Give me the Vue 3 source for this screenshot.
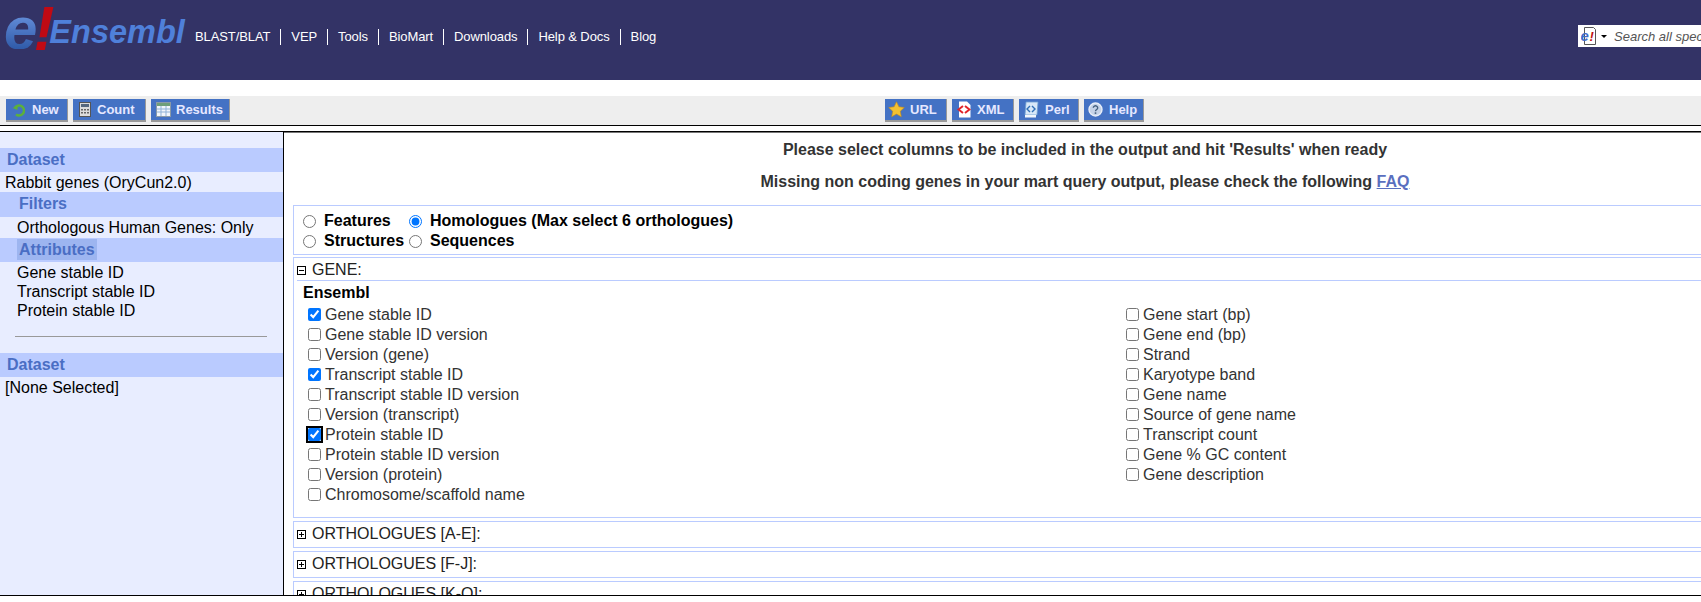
<template>
  <div class="page">
    <header class="masthead">
      <a class="logo">
        <span class="logo-e">e</span><span class="logo-bang">!</span><span class="logo-name">Ensembl</span>
      </a>
      <nav class="nav">
        <a v-for="item in navItems" :key="item">{{ item }}</a>
      </nav>
      <div class="search">
        <svg class="search-icon" width="15" height="18" viewBox="0 0 15 18">
          <path d="M3.500 0.500h9l2 2v15h-11z" fill="#fff" stroke="#555" />
          <text x="-0.500" y="14" class="mini-e">e</text>
          <text x="8.500" y="14" class="mini-bang">!</text>
        </svg>
        <span class="search-caret"></span>
        <span class="search-text">Search all species...</span>
      </div>
    </header>

    <div class="toolbar">
      <div class="tool-group">
        <button class="tool t-new">
          <svg width="14" height="14" viewBox="0 0 14 14">
            <path d="M3 4.500A5 5 0 0 1 12 7a5 5 0 0 1-5 5.500 5 5 0 0 1-3-1" fill="none" stroke="#5cb03c" stroke-width="2.400" />
            <path d="M0.500 4h6L4.600 7.600z" fill="#5cb03c" transform="rotate(-20 3 5)" />
          </svg>
          New
        </button>
        <button class="tool t-count">
          <svg width="12" height="15" viewBox="0 0 12 15">
            <rect x="0.500" y="0.500" width="11" height="14" fill="#dcdcdc" stroke="#555" />
            <rect x="2" y="2" width="8" height="3" fill="#56687e" />
            <path d="M2 7h2v1.500H2zM5 7h2v1.500H5zM8 7h2v1.500H8zM2 10h2v1.500H2zM5 10h2v1.500H5zM8 10h2v1.500H8z" fill="#666" />
          </svg>
          Count
        </button>
        <button class="tool t-results">
          <svg width="15" height="15" viewBox="0 0 15 15">
            <rect x="0.500" y="0.500" width="14" height="14" fill="#f2f6fb" stroke="#8a9aa8" />
            <rect x="1" y="1" width="13" height="3" fill="#6f9f7a" />
            <path d="M1 7h13M1 10h13M5 4v10M10 4v10" stroke="#8fb2d8" fill="none" />
          </svg>
          Results
        </button>
      </div>
      <div class="tool-group right">
        <button class="tool t-url">
          <svg width="17" height="17" viewBox="0 0 17 17">
            <path d="M8.500 0.800l2.400 5 5.400.7-4 3.800 1 5.400-4.800-2.600-4.800 2.600 1-5.400-4-3.800 5.400-.7z" fill="#f3c132" stroke="#c48a1a" stroke-width="0.600" />
          </svg>
          URL
        </button>
        <button class="tool t-xml">
          <svg width="14" height="17" viewBox="0 0 14 17">
            <path d="M2 0.500h8l3.500 3.500v12.500H2z" fill="#fff" />
            <path d="M6 5L1.500 8.500 6 12M8 5l4.500 3.500L8 12" fill="none" stroke="#e0242a" stroke-width="2" />
          </svg>
          XML
        </button>
        <button class="tool t-perl">
          <svg width="15" height="17" viewBox="0 0 15 17">
            <path d="M2 1h12l-1 13H1z" fill="#d8e8f8" stroke="#6fa0d0" stroke-width="0.800" />
            <path d="M1 14h11v2.500H1z" fill="#f2f7fc" />
            <path d="M6 5L3 8l3 3M8 5l3 3-3 3" fill="none" stroke="#2f6fb5" stroke-width="1.400" />
          </svg>
          Perl
        </button>
        <button class="tool t-help">
          <svg width="15" height="15" viewBox="0 0 15 15">
            <circle cx="7.500" cy="7.500" r="6.500" fill="#c5d3e8" stroke="#e8eef8" stroke-width="1.400" />
            <path d="M5.300 5.800a2.200 2 0 1 1 3.400 1.700c-.8.500-1.200.9-1.200 1.800" fill="none" stroke="#44607f" stroke-width="1.400" />
            <rect x="6.700" y="10.300" width="1.600" height="1.600" fill="#44607f" />
          </svg>
          Help
        </button>
      </div>
    </div>

    <div class="workspace">
      <aside class="sidebar">
        <div class="band">Dataset</div>
        <div class="side-line">Rabbit genes (OryCun2.0)</div>
        <div class="band sub">Filters</div>
        <div class="side-line indented filter-line">Orthologous Human Genes: Only</div>
        <div class="band sub attr"><span class="selected">Attributes</span></div>
        <div class="attr-list">
          <div v-for="a in chosenAttrs" :key="a" class="attr-item">{{ a }}</div>
        </div>
        <hr class="divider" />
        <div class="band">Dataset</div>
        <div class="side-line">[None Selected]</div>
      </aside>

      <main class="content">
        <p class="notice first">Please select columns to be included in the output and hit 'Results' when ready</p>
        <p class="notice">Missing non coding genes in your mart query output, please check the following <a class="faq">FAQ</a></p>

        <section class="panel page-types">
          <div class="radio-row">
            <label class="radio-cell cell-a"><input type="radio" name="pageType" />Features</label>
            <label class="radio-cell"><input type="radio" name="pageType" checked />Homologues (Max select 6 orthologues)</label>
          </div>
          <div class="radio-row">
            <label class="radio-cell cell-a"><input type="radio" name="pageType" />Structures</label>
            <label class="radio-cell"><input type="radio" name="pageType" />Sequences</label>
          </div>
        </section>

        <section class="panel gene">
          <div class="panel-head underlined">
            <svg class="toggle" width="9" height="9" viewBox="0 0 9 9">
              <rect x="0.500" y="0.500" width="8" height="8" fill="#fff" stroke="#000" />
              <path d="M2 4.500h5" stroke="#000" />
            </svg>
            GENE:
          </div>
          <h4 class="group-title">Ensembl</h4>
          <div class="columns">
            <div v-for="(col, i) in geneCols" :key="i" class="column">
              <label v-for="opt in col" :key="opt.label" class="check">
                <input type="checkbox" :checked="opt.on" :class="{ focused: opt.focus }" />
                <span>{{ opt.label }}</span>
              </label>
            </div>
          </div>
        </section>

        <section v-for="name in collapsed" :key="name" class="panel collapsed">
          <div class="panel-head">
            <svg class="toggle" width="9" height="9" viewBox="0 0 9 9">
              <rect x="0.500" y="0.500" width="8" height="8" fill="#fff" stroke="#000" />
              <path d="M2 4.500h5M4.500 2v5" stroke="#000" />
            </svg>
            {{ name }}
          </div>
        </section>
      </main>
    </div>
  </div>
</template>

<script setup>
const navItems = ['BLAST/BLAT', 'VEP', 'Tools', 'BioMart', 'Downloads', 'Help & Docs', 'Blog']

const chosenAttrs = ['Gene stable ID', 'Transcript stable ID', 'Protein stable ID']

const geneCols = [
  [
    { label: 'Gene stable ID', on: true },
    { label: 'Gene stable ID version' },
    { label: 'Version (gene)' },
    { label: 'Transcript stable ID', on: true },
    { label: 'Transcript stable ID version' },
    { label: 'Version (transcript)' },
    { label: 'Protein stable ID', on: true, focus: true },
    { label: 'Protein stable ID version' },
    { label: 'Version (protein)' },
    { label: 'Chromosome/scaffold name' }
  ],
  [
    { label: 'Gene start (bp)' },
    { label: 'Gene end (bp)' },
    { label: 'Strand' },
    { label: 'Karyotype band' },
    { label: 'Gene name' },
    { label: 'Source of gene name' },
    { label: 'Transcript count' },
    { label: 'Gene % GC content' },
    { label: 'Gene description' }
  ]
]

const collapsed = ['ORTHOLOGUES [A-E]:', 'ORTHOLOGUES [F-J]:', 'ORTHOLOGUES [K-O]:']
</script>

<style>
html, body { margin:0; background:#fff; overflow:hidden }
</style>

<style scoped>
.page { width:1701px; height:602px; overflow:hidden; font-family:"Liberation Sans", Arial, sans-serif; font-size:16px; color:#000; background:#fff }

.masthead { height:80px; background:#333366; display:flex; align-items:flex-start; position:relative }
.logo { display:flex; align-items:flex-start; width:195px; height:60px; padding-left:4px; box-sizing:border-box; font-style:italic; font-weight:bold; flex:none }
.logo-e { font-size:60px; line-height:40px; margin-top:9px; background:linear-gradient(#6d97e2, #2f5aa8); -webkit-background-clip:text; background-clip:text; -webkit-text-fill-color:transparent }
.logo-bang { font-size:63px; line-height:50px; color:#c00a14; margin:3px 0 0 -4px }
.logo-name { font-size:32.500px; line-height:40px; color:#4f80da; margin:12px 0 0 -5px }
.nav { display:flex; align-items:center; margin-top:29px; font-size:13px; letter-spacing:-0.1px; color:#fff }
.nav a { padding:0 10px; line-height:16px; border-right:1px solid #fff }
.nav a:first-child { padding-left:0 }
.nav a:last-child { border-right:none }
.search { position:absolute; left:1578px; top:25px; width:130px; height:22px; background:#fff; display:flex; align-items:center; padding-left:3px; box-sizing:border-box; white-space:nowrap }
.search-icon { flex:none }
.mini-e { font:italic bold 15px "Liberation Sans", sans-serif; fill:#3d6cc9 }
.mini-bang { font:italic bold 13px "Liberation Sans", sans-serif; fill:#c01010 }
.search-caret { width:0; height:0; border:3px solid transparent; border-top:3px solid #000; border-bottom:none; margin:0 7px 0 5px; flex:none }
.search-text { font-size:13px; font-style:italic; color:#555 }

.toolbar { margin-top:16px; height:29px; background:#eee; border-bottom:1px solid #000; display:flex; position:relative }
.tool-group { display:flex; gap:5px; padding:3px 0 0 6px }
.tool-group.right { padding-left:0; position:absolute; left:885px }
.tool { height:23px; padding:0 0 0 6px; border:none; border-right:1px solid #999; border-bottom:2px solid #999; background:#4472c4; color:#e6e8ff; font-family:inherit; font-size:13px; font-weight:bold; display:flex; align-items:center; gap:6px; box-sizing:border-box }
.t-new { width:62px }
.t-count { width:73px }
.t-results { width:79px; padding-left:5px; gap:5px }
.t-url { width:62px; padding-left:3px; gap:5px }
.t-xml { width:62px; padding-left:5px }
.t-perl { width:60px; padding-left:5px }
.t-help { width:60px; padding-left:4px }

.workspace { margin-top:5px; height:463px; border-top:1px solid #000; border-bottom:1px solid #000; display:flex; overflow:hidden }
.sidebar { width:283px; flex:none; background:#e8edff; border-right:1px solid #000; padding-top:16px }
.band { height:24px; line-height:24px; padding-left:7px; background:#bacbff; color:#4a6ec4; font-weight:bold }
.band.sub { height:25px; padding-left:19px }
.band.attr { height:24px; padding-left:17px }
.selected { background:#9db5f0; padding:2px 2px }
.side-line { height:20px; line-height:22px; padding-left:5px }
.indented { padding-left:17px }
.filter-line { height:21px; line-height:21px }
.attr-list { padding:1px 0 0 17px }
.attr-item { height:19px; line-height:19px }
.divider { margin:16px 16px 16px 15px; border:none; border-top:1px solid #999 }

.content { flex:1; min-width:0; padding:0 0 0 9px; overflow:hidden; box-shadow:inset 0 1px 0 #777 }
.notice { margin:12px 0 0; width:1584px; height:20px; line-height:20px; text-align:center; font-weight:bold; color:#333 }
.notice.first { margin-top:8px }
.faq { color:#5a6fbf; text-decoration:underline }

.panel { border:1px solid #bacbff; border-right:none; margin-top:3px; width:1500px; box-sizing:border-box }
.page-types { margin-top:13px; height:50px; padding-top:5px }
.radio-row { display:flex; height:20px; align-items:center; font-weight:bold; color:#000 }
.radio-cell { display:flex; align-items:center; white-space:nowrap }
.radio-cell input { margin:0 8px 0 0; width:13px; height:13px }
.cell-a { width:106px; padding-left:9px }

.gene { height:261px; margin-top:2px }
.panel-head { display:flex; align-items:center; height:24px; padding-left:3px; color:#222; white-space:nowrap }
.underlined { height:23px; box-sizing:border-box; padding:2px 0 0; margin-left:3px; border-bottom:1px solid #bacbff }
.toggle { margin-right:6px; flex:none }
.group-title { margin:2px 0 0 9px; font-size:16px; line-height:20px; font-weight:bold; color:#000 }
.columns { display:flex; margin-top:2px }
.column { display:flex; flex-direction:column }
.column:first-child { width:818px }
.check { height:20px; display:flex; align-items:center; padding-left:14px; color:#333; white-space:nowrap }
.check input { margin:-2px 4px 0 0; width:13px; height:13px }
.focused { outline:2px solid #000; outline-offset:0; border-radius:2px }

.collapsed { height:27px }
</style>
